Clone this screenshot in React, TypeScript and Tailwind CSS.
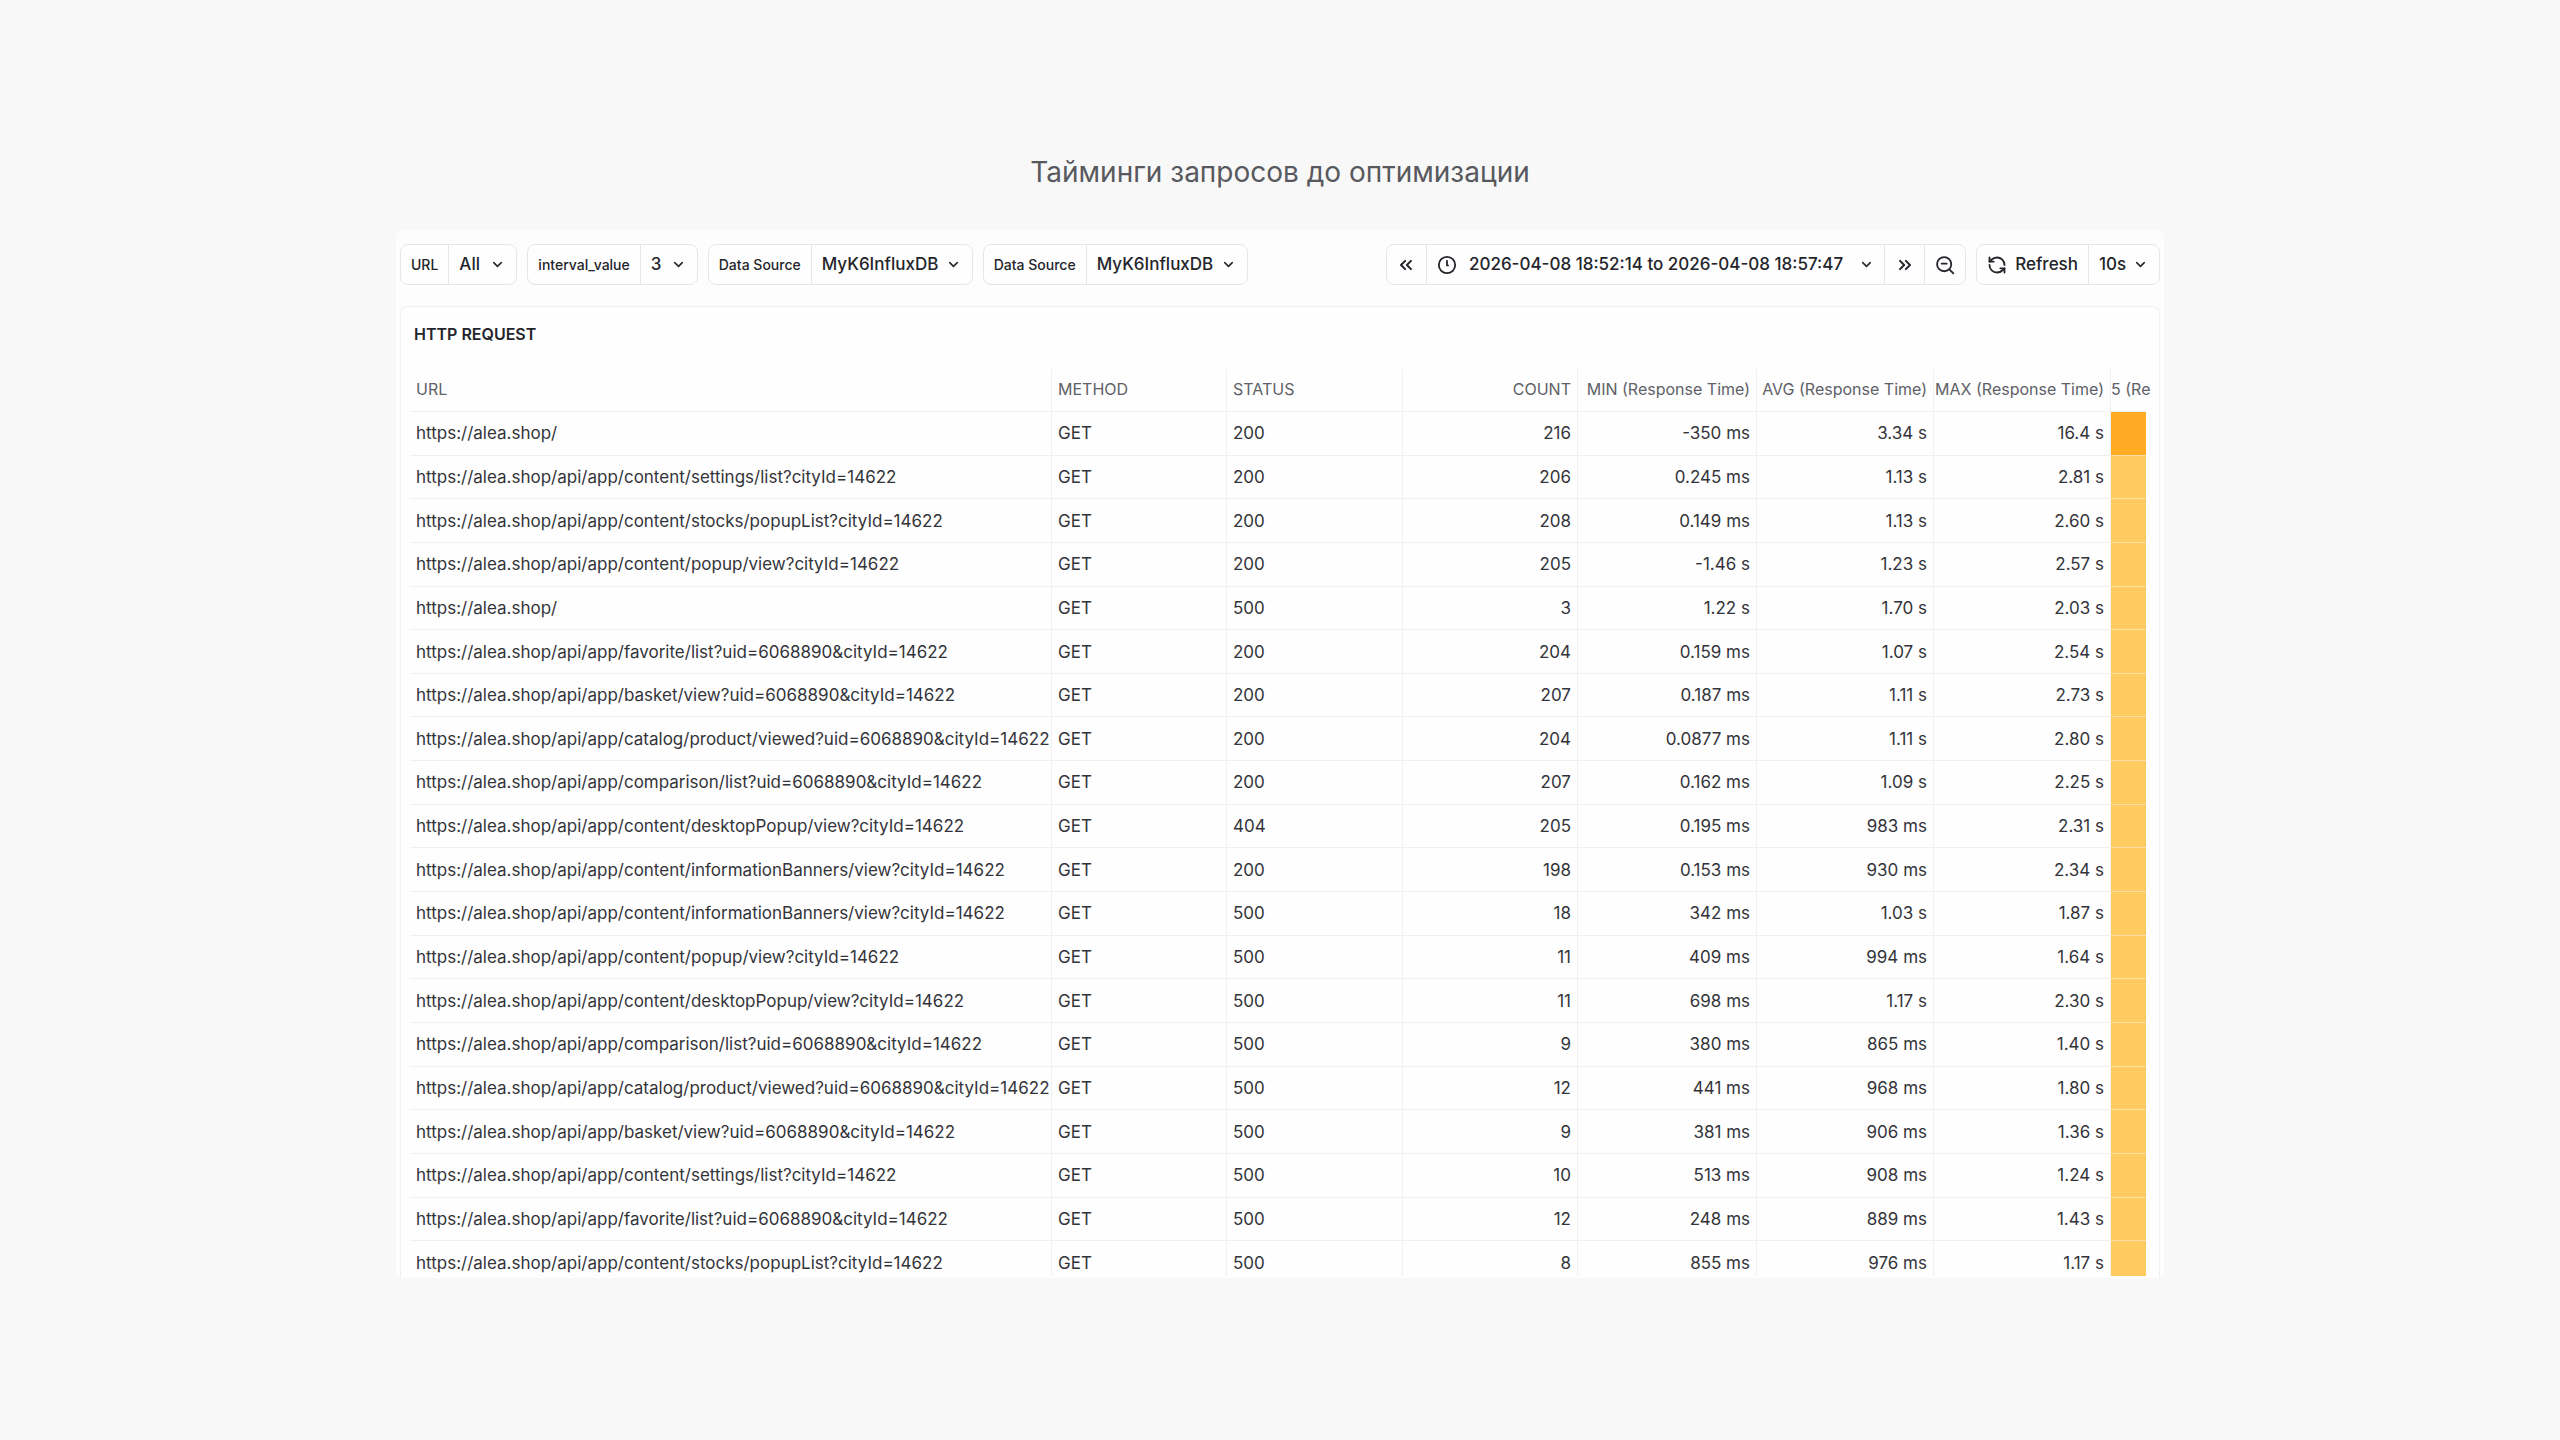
import { ChevronDown, ChevronsLeft, ChevronsRight, RefreshCcw } from "lucide-react";

const rows = [
  ["/", "200", "216", "-350 ms", "3.34 s", "16.4 s"],
  ["/api/app/content/settings/list?cityId=14622", "200", "206", "0.245 ms", "1.13 s", "2.81 s"],
  ["/api/app/content/stocks/popupList?cityId=14622", "200", "208", "0.149 ms", "1.13 s", "2.60 s"],
  ["/api/app/content/popup/view?cityId=14622", "200", "205", "-1.46 s", "1.23 s", "2.57 s"],
  ["/", "500", "3", "1.22 s", "1.70 s", "2.03 s"],
  ["/api/app/favorite/list?uid=6068890&cityId=14622", "200", "204", "0.159 ms", "1.07 s", "2.54 s"],
  ["/api/app/basket/view?uid=6068890&cityId=14622", "200", "207", "0.187 ms", "1.11 s", "2.73 s"],
  ["/api/app/catalog/product/viewed?uid=6068890&cityId=14622", "200", "204", "0.0877 ms", "1.11 s", "2.80 s"],
  ["/api/app/comparison/list?uid=6068890&cityId=14622", "200", "207", "0.162 ms", "1.09 s", "2.25 s"],
  ["/api/app/content/desktopPopup/view?cityId=14622", "404", "205", "0.195 ms", "983 ms", "2.31 s"],
  ["/api/app/content/informationBanners/view?cityId=14622", "200", "198", "0.153 ms", "930 ms", "2.34 s"],
  ["/api/app/content/informationBanners/view?cityId=14622", "500", "18", "342 ms", "1.03 s", "1.87 s"],
  ["/api/app/content/popup/view?cityId=14622", "500", "11", "409 ms", "994 ms", "1.64 s"],
  ["/api/app/content/desktopPopup/view?cityId=14622", "500", "11", "698 ms", "1.17 s", "2.30 s"],
  ["/api/app/comparison/list?uid=6068890&cityId=14622", "500", "9", "380 ms", "865 ms", "1.40 s"],
  ["/api/app/catalog/product/viewed?uid=6068890&cityId=14622", "500", "12", "441 ms", "968 ms", "1.80 s"],
  ["/api/app/basket/view?uid=6068890&cityId=14622", "500", "9", "381 ms", "906 ms", "1.36 s"],
  ["/api/app/content/settings/list?cityId=14622", "500", "10", "513 ms", "908 ms", "1.24 s"],
  ["/api/app/favorite/list?uid=6068890&cityId=14622", "500", "12", "248 ms", "889 ms", "1.43 s"],
  ["/api/app/content/stocks/popupList?cityId=14622", "500", "8", "855 ms", "976 ms", "1.17 s"],
];

const filters = [
  { id: "url", label: "URL", value: "All", width: "w-[67px]" },
  { id: "interval", label: "interval_value", value: "3", width: "w-[56px]" },
  { id: "source-1", label: "Data Source", value: "MyK6InfluxDB", width: "w-[160px]" },
  { id: "source-2", label: "Data Source", value: "MyK6InfluxDB", width: "w-[160px]" },
];

const group = "flex h-[41px] items-stretch overflow-hidden rounded-lg border border-[#e6e6e8] bg-[#fefefe]";
const cell = "border-r border-b border-[#f0f0f1] px-1.5 py-[9px] whitespace-nowrap";
const head = "overflow-hidden border-r border-b border-[#f0f0f1] px-1.5 pt-2 pb-[10px] font-normal whitespace-nowrap";

function Select({ id, value, width, label }: { id: string; value: string; width: string; label?: string }) {
  return (
    <div className={`relative flex ${width}`}>
      <select id={id} aria-label={label} className="w-full appearance-none bg-transparent pl-[10px] font-medium outline-none">
        <option>{value}</option>
      </select>
      <ChevronDown size={15} strokeWidth={2.5} className="pointer-events-none absolute top-3 right-[11px]" />
    </div>
  );
}

function ClockIcon() {
  return (
    <svg width="20" height="20" viewBox="0 0 24 24" fill="none" stroke="currentColor" strokeWidth="2.2" strokeLinecap="round" strokeLinejoin="round">
      <circle cx="12" cy="12" r="9.8" />
      <path d="M12 7v5.5h1.2" />
    </svg>
  );
}

function ZoomOutIcon() {
  return (
    <svg width="20" height="20" viewBox="0 0 24 24" fill="none" stroke="currentColor" strokeWidth="2.2" strokeLinecap="round">
      <circle cx="11" cy="11" r="8.5" />
      <path d="M17.2 17.2 22 22M8 10.4h6" />
    </svg>
  );
}

// header text is aligned to the right edge and cut off on the left when it does not fit
function NumberHead({ children }: { children: string }) {
  return (
    <th scope="col" className={head}>
      <div className="flex justify-end">
        <span>{children}</span>
      </div>
    </th>
  );
}

export default function App() {
  return (
    <main className="min-h-screen bg-[#f8f8f8] px-4 pt-[154px] pb-[162px] font-['Inter',sans-serif] text-[#24252b]">
      <h1 className="mb-10 text-center text-[28px] leading-9 text-[#58595e]">Тайминги запросов до оптимизации</h1>

      <div className="mx-auto w-full max-w-[1768px] overflow-hidden rounded-lg bg-[#fdfdfd] px-1 pt-[14px]">
        <div className="mb-[21px] flex items-center justify-between text-[17px]">
          <div className="flex gap-[10px]">
            {filters.map((f) => (
              <div key={f.id} className={group}>
                <label htmlFor={f.id} className="flex items-center border-r border-[#e6e6e8] px-[10px] text-sm font-medium">
                  {f.label}
                </label>
                <Select id={f.id} value={f.value} width={f.width} />
              </div>
            ))}
          </div>

          <div className="flex gap-[10px]">
            <div className={group}>
              <button aria-label="Back" className="flex w-10 items-center justify-center border-r border-[#e6e6e8]">
                <ChevronsLeft size={20} strokeWidth={2.4} />
              </button>
              <button className="flex items-center gap-3 border-r border-[#e6e6e8] px-[10px] font-medium">
                <ClockIcon />
                <span className="mr-1">2026-04-08 18:52:14 to 2026-04-08 18:57:47</span>
                <ChevronDown size={15} strokeWidth={2.5} />
              </button>
              <button aria-label="Forward" className="flex w-10 items-center justify-center border-r border-[#e6e6e8]">
                <ChevronsRight size={20} strokeWidth={2.4} />
              </button>
              <button aria-label="Zoom out" className="flex w-10 items-center justify-center">
                <ZoomOutIcon />
              </button>
            </div>
            <div className={group}>
              <button className="flex items-center gap-2 border-r border-[#e6e6e8] px-[10px] font-medium">
                <RefreshCcw size={20} strokeWidth={2.2} />
                Refresh
              </button>
              <Select id="refresh-rate" value="10s" width="w-[70px]" label="Refresh rate" />
            </div>
          </div>
        </div>

        <section className="rounded-t-lg border border-b-0 border-[#f0f0f1] bg-[#fefefe] pt-[15px] pb-0.5">
          <h2 className="mb-[23px] pl-[13px] text-base leading-6 font-semibold">HTTP REQUEST</h2>
          <div className="max-h-[907px] overflow-hidden pr-[13px] pl-[9px]">
            <table className="h-[916px] w-full table-fixed border-separate border-spacing-0 text-[17px] leading-6 text-[#33343a]">
              <colgroup>
                <col />
                <col className="w-[175px]" />
                <col className="w-[176px]" />
                <col className="w-[175px]" />
                <col className="w-[179px]" />
                <col className="w-[177px]" />
                <col className="w-[177px]" />
                <col className="w-[35px]" />
              </colgroup>
              <thead className="text-left text-base leading-6 text-[#606167]">
                <tr>
                  <th scope="col" className={head}>URL</th>
                  <th scope="col" className={head}>METHOD</th>
                  <th scope="col" className={head}>STATUS</th>
                  <NumberHead>COUNT</NumberHead>
                  <NumberHead>MIN (Response Time)</NumberHead>
                  <NumberHead>AVG (Response Time)</NumberHead>
                  <NumberHead>MAX (Response Time)</NumberHead>
                  <th scope="col" className="border-b border-[#f0f0f1] pt-2 pb-[10px] font-normal whitespace-nowrap">
                    5 (Re
                  </th>
                </tr>
              </thead>
              <tbody>
                {rows.map(([path, status, count, min, avg, max], i) => (
                  <tr key={i}>
                    <td className={cell}>https://alea.shop{path}</td>
                    <td className={cell}>GET</td>
                    <td className={cell}>{status}</td>
                    <td className={`${cell} text-right`}>{count}</td>
                    <td className={`${cell} text-right`}>{min}</td>
                    <td className={`${cell} text-right`}>{avg}</td>
                    <td className={`${cell} text-right`}>{max}</td>
                    <td className={`border-b border-[#ffe0a3] ${i === 0 ? "bg-[#ffab24]" : "bg-[#ffca60]"}`} />
                  </tr>
                ))}
              </tbody>
            </table>
          </div>
        </section>
      </div>
    </main>
  );
}
